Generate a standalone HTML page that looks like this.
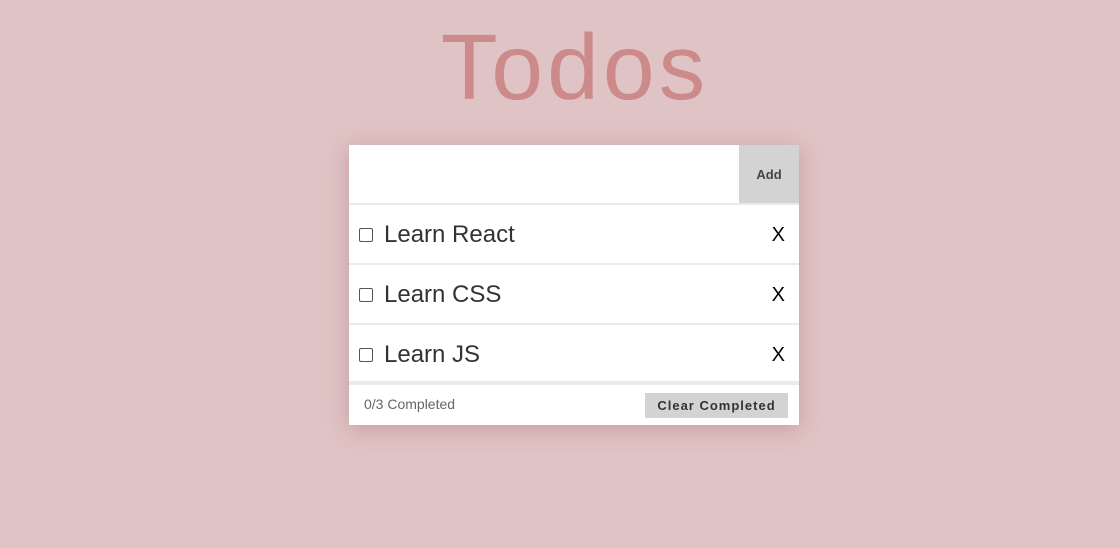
<!DOCTYPE html>
<html><head><style>
html,body{margin:0;padding:0}
body{width:1120px;height:548px;background:#e0c3c4;font-family:"Comic Sans MS","Liberation Sans",sans-serif;position:relative;overflow:hidden}
h1{position:absolute;left:0;width:1150px;top:12px;margin:0;text-align:center;font-size:93px;font-weight:normal;color:#cd8a8b;letter-spacing:4px;line-height:110px}
.card{position:absolute;left:349px;top:145px;width:450px;height:280px;background:#fff;box-shadow:0 4px 20px rgba(150,90,90,.35)}
.inp{position:absolute;left:0;top:0;width:450px;height:58px;border-bottom:2px solid #eaeaea}
.add{position:absolute;right:0;top:0;width:60px;height:58px;background:#d3d3d3;color:#444;font-weight:bold;font-size:13px;line-height:60px;text-align:center}
.item{position:absolute;left:0;width:450px;height:58px;border-bottom:2px solid #eaeaea}
.cb{position:absolute;left:10px;top:23px;width:14px;height:14px;border:1px solid #555;border-radius:2px;box-sizing:border-box}
.t{position:absolute;left:35px;top:14px;font-size:24px;color:#333;line-height:32px}
.x{position:absolute;right:14px;top:17px;font-size:20px;color:#000;line-height:26px}
.foot{position:absolute;left:0;top:238px;width:450px;height:42px;border-top:2px solid #eaeaea}
.cnt{position:absolute;left:15px;top:11px;font-size:14px;color:#666}
.clr{position:absolute;left:296px;top:8px;width:143px;height:25px;background:#d3d3d3;color:#333;font-weight:bold;font-size:13px;line-height:25px;text-align:center;letter-spacing:1px}
</style></head><body>
<h1>Todos</h1>
<div class="card">
<div class="inp"><div class="add">Add</div></div>
<div class="item" style="top:60px"><div class="cb"></div><div class="t">Learn React</div><div class="x">X</div></div>
<div class="item" style="top:120px"><div class="cb"></div><div class="t">Learn CSS</div><div class="x">X</div></div>
<div class="item" style="top:180px;height:56px"><div class="cb"></div><div class="t">Learn JS</div><div class="x">X</div></div>
<div class="foot"><div class="cnt">0/3 Completed</div><div class="clr">Clear Completed</div></div>
</div>
</body></html>
